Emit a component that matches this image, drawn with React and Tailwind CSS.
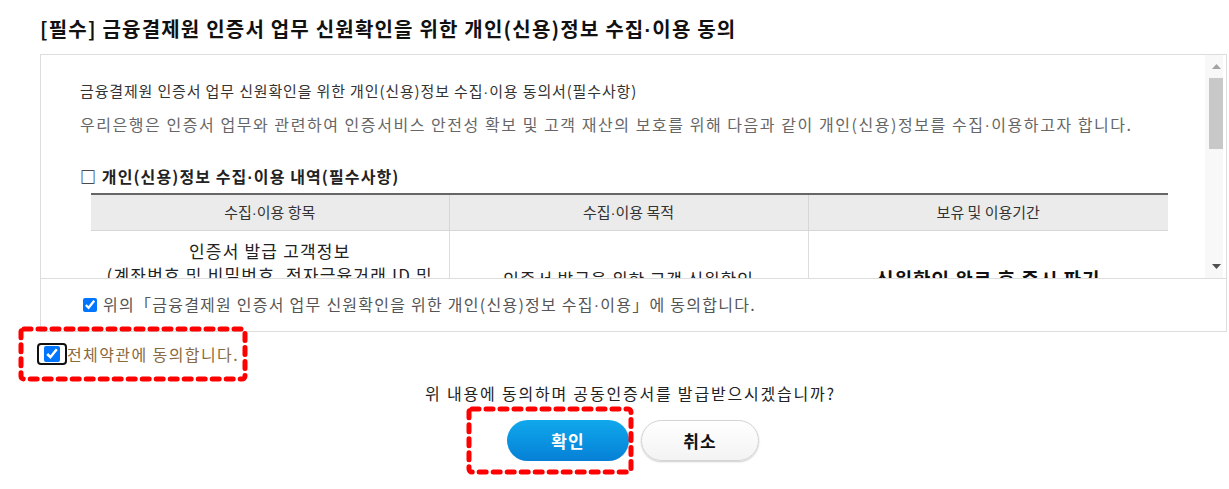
import React from 'react';

const font = { fontFamily: '"Noto Sans CJK KR", "Noto Sans", sans-serif' };

// 가운데점은 라틴 폰트로 좁게
const Dot = () => <span className="font-['Liberation_Sans']">·</span>;

// 빨간 점선 강조 박스 (스크린샷 주석)
const DottedMark = () => (
  <svg className="pointer-events-none absolute inset-0 w-full h-full" preserveAspectRatio="none">
    <rect
      x="3"
      y="3"
      width="calc(100% - 6px)"
      height="calc(100% - 6px)"
      rx="3"
      fill="none"
      stroke="#ff0000"
      strokeWidth="5"
      strokeDasharray="7 7"
      strokeLinecap="round"
    />
  </svg>
);

const App = () => {
  return (
    <div className="w-[1229px] h-[489px] bg-white overflow-hidden text-[#333]" style={font}>
      {/* 제목 */}
      <h2 className="pl-[40px] pt-[13px] h-[54px] text-[20px] font-bold text-[#111] leading-[32px] tracking-[1.2px]">
        [필수] 금융결제원 인증서 업무 신원확인을 위한 개인(신용)정보 수집<Dot />이용 동의
      </h2>

      {/* 약관 박스 */}
      <div className="ml-[40px] w-[1187px] border border-[#dddddd]">
        <div className="flex h-[223px]">
          <div className="flex-1 overflow-hidden pl-[39px] pt-[24px]">
            <p className="text-[15px] leading-[24px] text-[#333] tracking-[0.85px]">
              금융결제원 인증서 업무 신원확인을 위한 개인(신용)정보 수집<Dot />이용 동의서(필수사항)
            </p>
            <p className="mt-[8px] text-[16px] leading-[24px] text-[#666] tracking-[1.55px] whitespace-nowrap">
              우리은행은 인증서 업무와 관련하여 인증서비스 안전성 확보 및 고객 재산의 보호를 위해 다음과 같이 개인(신용)정보를 수집<Dot />이용하고자 합니다.
            </p>

            <p className="mt-[26px] text-[16px] font-bold leading-[24px] text-[#222] tracking-[1.1px]">
              □ 개인(신용)정보 수집<Dot />이용 내역(필수사항)
            </p>

            <table className="ml-[11px] mt-[3px] w-[1077px] border-collapse text-center">
              <thead>
                <tr className="bg-[#ebebeb] border-t-2 border-[#666]">
                  <th className="h-[36px] w-[358px] border-r border-b border-[#d6d6d6] text-[15px] font-normal text-[#333]">
                    수집<Dot />이용 항목
                  </th>
                  <th className="w-[359px] border-r border-b border-[#d6d6d6] text-[15px] font-normal text-[#333]">
                    수집<Dot />이용 목적
                  </th>
                  <th className="border-b border-[#d6d6d6] text-[15px] font-normal text-[#333]">
                    보유 및 이용기간
                  </th>
                </tr>
              </thead>
              <tbody>
                <tr>
                  <td className="border-r border-b border-[#dddddd] pt-[8px] pb-[10px] text-[17px] leading-[24px] text-[#222] tracking-[1.2px] whitespace-nowrap">
                    인증서 발급 고객정보
                    <br />
                    (계좌번호 및 비밀번호, 전자금융거래 ID 및
                    <br />
                    비밀번호, 보안매체 정보 등)
                  </td>
                  <td className="border-r border-b border-[#dddddd] pt-[6px] text-[17px] leading-[24px] text-[#222] tracking-[0.9px]">
                    인증서 발급을 위한 고객 신원확인
                  </td>
                  <td className="border-b border-[#dddddd] pt-[6px] text-[19px] font-bold leading-[24px] text-[#111] tracking-[1px]">
                    신원확인 완료 후 즉시 파기
                  </td>
                </tr>
              </tbody>
            </table>

            <p className="mt-[16px] mb-[20px] text-[15px] leading-[22px] text-[#666]">
              ※ 위의 개인(신용)정보 수집<Dot />이용에 대한 동의를 거부할 권리가 있습니다. 다만, 동의하지 않으실 경우 인증서 발급이 제한됩니다.
            </p>
          </div>

          {/* 스크롤바 */}
          <div className="w-[18px] mr-[3px] bg-[#f8f8f8] flex flex-col items-center">
            <div className="h-[23px] flex items-center justify-center pl-[4px]">
              <svg width="9" height="5" viewBox="0 0 9 5">
                <path d="M0 5 L4.5 0 L9 5 Z" fill="#a3a3a3" />
              </svg>
            </div>
            <div className="ml-[4px] w-[14px] h-[71px] bg-[#c8c8c8]" />
            <div className="flex-1" />
            <div className="h-[24px] flex items-center justify-center pl-[4px]">
              <svg width="9" height="5" viewBox="0 0 9 5">
                <path d="M0 0 L9 0 L4.5 5 Z" fill="#505050" />
              </svg>
            </div>
          </div>
        </div>

        <div className="h-[53px] border-t border-[#dddddd] flex items-center pl-[42px] gap-[6px]">
          <input type="checkbox" defaultChecked className="w-[14px] h-[14px] m-0 accent-[#0075ff]" />
          <span className="text-[16px] text-[#555] tracking-[1.25px]">
            위의「금융결제원 인증서 업무 신원확인을 위한 개인(신용)정보 수집<Dot />이용」에 동의합니다.
          </span>
        </div>
      </div>

      {/* 전체 동의 */}
      <div className="relative ml-[18px] mt-[-6px] w-[230px] h-[56px] flex items-center pl-[19px]">
        <DottedMark />
        <span className="flex items-center justify-center w-[30px] h-[22px] border-2 border-[#111] rounded-[4px]">
          <input type="checkbox" defaultChecked className="w-[16px] h-[16px] m-0 accent-[#0075ff]" />
        </span>
        <span className="text-[16px] text-[#8a6a3e] tracking-[1.4px]">전체약관에 동의합니다.</span>
      </div>

      <p className="mt-[-1px] text-center text-[16px] leading-[24px] text-[#222] tracking-[1.8px] pl-[32px]">
        위 내용에 동의하며 공동인증서를 발급받으시겠습니까?
      </p>

      {/* 버튼 */}
      <div className="mt-[1px] flex justify-center gap-[7px] pr-[4px]">
        <div className="relative flex items-center h-[69px] pl-[41px] pr-[5px]">
          <DottedMark />
          <button className="w-[122px] h-[41px] rounded-full bg-gradient-to-b from-[#11a8ec] to-[#0780d6] text-white text-[17px] font-bold tracking-[1px]">
            확인
          </button>
        </div>
        <div className="flex items-center h-[69px]">
          <button className="w-[118px] h-[41px] rounded-full bg-gradient-to-b from-white to-[#f3f3f3] border border-[#d4d4d4] shadow-[0_1px_2px_rgba(0,0,0,0.2)] text-[#111] text-[17px] font-bold tracking-[1px]">
            취소
          </button>
        </div>
      </div>
    </div>
  );
};

export default App;
